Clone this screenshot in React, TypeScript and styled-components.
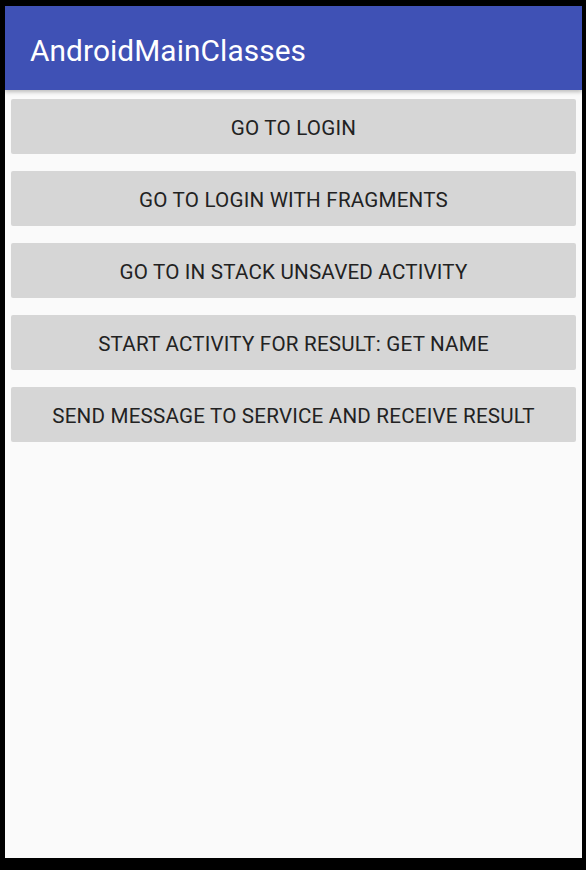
import React from "react";
import styled, { createGlobalStyle } from "styled-components";

const Global = createGlobalStyle`
  html, body { margin: 0; padding: 0; background: #000; }
  body { font-family: Roboto, "Noto Sans", sans-serif; }
`;

const Frame = styled.div`
  width: 586px;
  height: 870px;
  box-sizing: border-box;
  background: #000;
  padding: 6px 4px 12px 5px;
  display: flex;
`;

const Screen = styled.div`
  flex: 1;
  background: #fafafa;
  display: flex;
  flex-direction: column;
`;

const AppBar = styled.header`
  height: 84px;
  background: #3f51b5;
  display: flex;
  align-items: center;
  padding-left: 25px;
  padding-top: 4px;
  box-sizing: border-box;
  box-shadow: 0 2px 4px rgba(0, 0, 0, 0.25);
  position: relative;
  z-index: 1;
`;

const Title = styled.h1`
  margin: 0;
  color: #fff;
  font-family: Roboto, sans-serif;
  font-weight: 400;
  font-size: 29.8px;
  letter-spacing: 0.1px;
`;

const List = styled.div`
  display: flex;
  flex-direction: column;
  gap: 17px;
  padding: 9px 6px 0 6px;
`;

const Button = styled.button`
  height: 55px;
  border: none;
  border-radius: 2px;
  background: #d6d6d6;
  color: #222;
  font-family: Roboto, sans-serif;
  font-size: 20.6px;
  font-weight: 400;
  letter-spacing: 0.2px;
  text-transform: uppercase;
  padding: 3px 0 0 0;
  cursor: pointer;
`;

const items = [
  "Go to login",
  "Go to login with fragments",
  "Go to in stack unsaved activity",
  "Start activity for result: get name",
  "Send message to service and receive result",
];

export default function App() {
  return (
    <>
      <Global />
      <Frame>
        <Screen>
          <AppBar>
            <Title>AndroidMainClasses</Title>
          </AppBar>
          <List>
            {items.map((t) => (
              <Button key={t}>{t}</Button>
            ))}
          </List>
        </Screen>
      </Frame>
    </>
  );
}
